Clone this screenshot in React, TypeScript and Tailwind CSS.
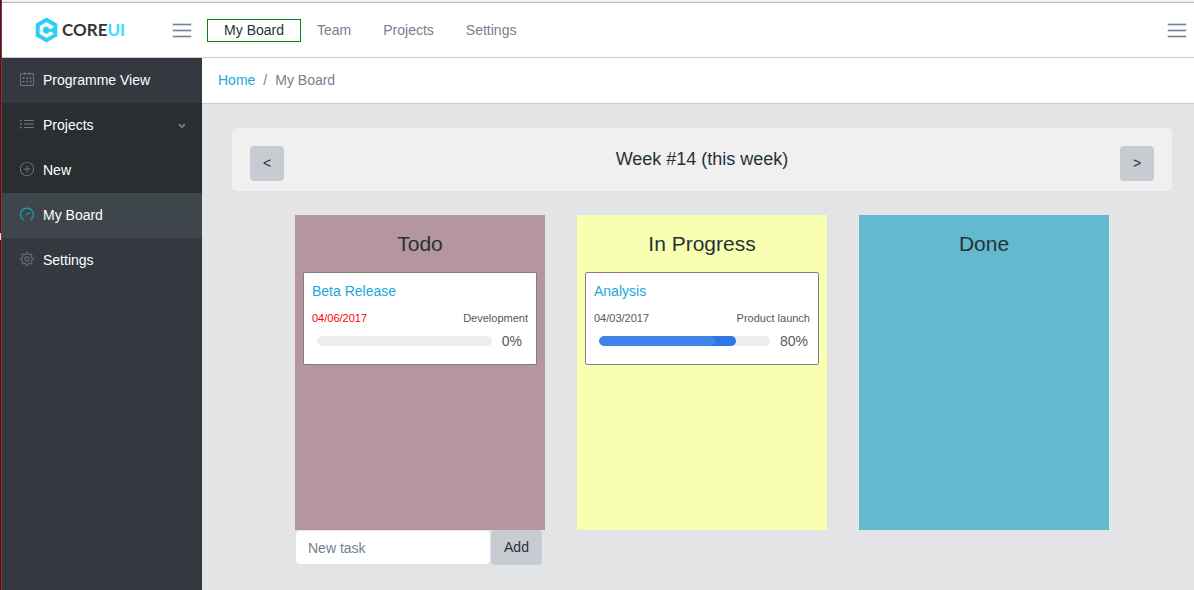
import { useState } from "react";
import type { ReactNode } from "react";
import { SlCalender, SlList, SlPlus, SlSpeedometer, SlSettings } from "react-icons/sl";

type Task = {
  title: string;
  date: string;
  late?: boolean;
  project: string;
  progress: number;
};

function MenuLines() {
  return (
    <svg viewBox="0 0 20 16" className="h-4 w-5" fill="none" stroke="#d3d9df" aria-hidden="true">
      <path d="M0.5 2.5h19M0.5 8.5h19M0.5 14.5h19" strokeWidth="3" />
      <path d="M1 2.5h18M1 8.5h18M1 14.5h18" stroke="#73818f" strokeWidth="1" />
    </svg>
  );
}

function Logo() {
  return (
    <a href="#home" className="flex items-center gap-1" aria-label="CoreUI">
      <svg viewBox="0 0 22 26" className="h-[26px] w-[23px]" aria-hidden="true">
        <path d="M11 0.5 21.8 6.7v12.6L11 25.5 0.2 19.3V6.7z" fill="#2fcdf0" />
        <path
          d="M11 5 17.8 8.9v1.8l-3.2 1.5L11 9.2 7.6 11v4l3.4 2 3.6-2.6 3.2 1.5v1.3L11 21l-6.8-3.9V8.9z"
          fill="#eefafd"
        />
      </svg>
      <span className="font-['Lato'] text-[17px] leading-6 font-bold text-[#303539]">
        CORE<span className="text-[#3ddcff]">UI</span>
      </span>
    </a>
  );
}

function SideItem({
  icon,
  label,
  tone,
  chevron,
}: {
  icon: ReactNode;
  label: string;
  tone: string;
  chevron?: boolean;
}) {
  return (
    <li>
      <a href="#nav" className={`flex h-[45px] items-center gap-[9px] pr-4 pl-[18px] text-white ${tone}`}>
        <span className="shrink-0 pb-[3px] text-[14px]">{icon}</span>
        <span className="flex-1">{label}</span>
        {chevron && (
          <svg viewBox="0 0 8 6" className="h-[6px] w-2" fill="none" stroke="#73818f" strokeWidth="1.8" aria-hidden="true">
            <path d="M1 1.2 4 4.2 7 1.2" />
          </svg>
        )}
      </a>
    </li>
  );
}

function TaskCard({ task }: { task: Task }) {
  return (
    <article className="rounded-[2px] border border-[#808080] bg-white px-2 pt-2 pb-[13px] text-[#55595c]">
      <h3 className="leading-5">
        <a href="#task" className="text-[#20a8d8]">
          {task.title}
        </a>
      </h3>
      <div className="mt-2 flex justify-between text-[11px] leading-[18px]">
        <span className={task.late ? "text-[#ff0000]" : ""}>{task.date}</span>
        <span>{task.project}</span>
      </div>
      <div className="mt-1 flex items-center gap-[10px] pr-[2px] pl-[5px] leading-5">
        <div
          role="progressbar"
          aria-label={task.title}
          aria-valuenow={task.progress}
          className="h-[10px] flex-1 overflow-hidden rounded-full bg-[#eeeeee]"
        >
          <div className="h-full overflow-hidden rounded-full bg-[#2d78e6]" style={{ width: `${task.progress}%` }}>
            <div className="h-full w-[85%] rounded-full bg-[#4086e8]" />
          </div>
        </div>
        <span className={task.progress === 0 ? "pr-1" : ""}>{task.progress}%</span>
      </div>
    </article>
  );
}

function Column({ title, tone, tasks, children }: { title: string; tone: string; tasks: Task[]; children?: ReactNode }) {
  return (
    <section className="w-[250px]">
      <div className={`min-h-[315px] px-2 pt-4 ${tone}`}>
        <h2 className="mb-4 text-center text-[21px] leading-[25px] font-medium text-[#263238]">{title}</h2>
        {tasks.map((t) => (
          <TaskCard key={t.title} task={t} />
        ))}
      </div>
      {children}
    </section>
  );
}

export default function App() {
  const [draft, setDraft] = useState("");

  return (
    <div className="flex min-h-screen bg-[#e3e4e6] font-['Liberation_Sans',Arial,sans-serif] text-[14px] text-[#263238]">
      <div className="flex w-[2px] shrink-0 flex-col border-r border-[#7a3d42] bg-[#560d16]">
        <div className="mt-[233px] h-[7px] bg-[#d9d9d9]" />
      </div>
      <div className="flex min-w-0 flex-1 flex-col">
        <div className="h-[3px] border-b border-[#b2b2b2] bg-[#f2f1f0]" />
        <header className="flex h-[55px] items-center border-b border-[#c8ccd2] bg-white pr-[7px] pl-[33px]">
          <Logo />
          <button type="button" aria-label="Toggle sidebar" className="ml-[47px]">
            <MenuLines />
          </button>
          <nav className="ml-[15px] flex items-center leading-[21px] text-[#73818f]">
            <a href="#board" className="border border-[#008c15] px-4 text-[#263238]">
              My Board
            </a>
            <a href="#team" className="px-4">
              Team
            </a>
            <a href="#projects" className="px-4">
              Projects
            </a>
            <a href="#settings" className="px-4">
              Settings
            </a>
          </nav>
          <button type="button" aria-label="Toggle side panel" className="ml-auto">
            <MenuLines />
          </button>
        </header>

        <div className="flex flex-1">
          <aside className="w-[200px] shrink-0 bg-[#343940]">
            <ul>
              <SideItem icon={<SlCalender color="#6b7a88" />} label="Programme View" tone="" />
              <SideItem icon={<SlList color="#6b7a88" />} label="Projects" tone="bg-[#292e31]" chevron />
              <SideItem icon={<SlPlus color="#6b7a88" />} label="New" tone="bg-[#292e31]" />
              <SideItem icon={<SlSpeedometer color="#20a8d8" />} label="My Board" tone="bg-[#3f464b]" />
              <SideItem icon={<SlSettings color="#6b7a88" />} label="Settings" tone="" />
            </ul>
          </aside>

          <main className="min-w-0 flex-1">
            <nav aria-label="Breadcrumb" className="flex h-[46px] items-center gap-2 border-b border-[#c8ccd2] bg-white px-4 text-[#73818f]">
              <a href="#home" className="text-[#20a8d8]">
                Home
              </a>
              <span>/</span>
              <span>My Board</span>
            </nav>

            <div className="pt-6 pr-[22px] pl-[30px]">
              <div className="flex h-[63px] items-start justify-between rounded-[5px] bg-[#f0f0f0] px-[18px] pt-[18px]">
                <button type="button" aria-label="Previous week" className="h-[35px] w-[34px] rounded-[4px] bg-[#c7ccd3]">
                  &lt;
                </button>
                <h1 className="text-[18px] leading-[26px]">Week #14 (this week)</h1>
                <button type="button" aria-label="Next week" className="h-[35px] w-[34px] rounded-[4px] bg-[#c7ccd3]">
                  &gt;
                </button>
              </div>

              <div className="mt-6 flex justify-center gap-8">
                <Column
                  title="Todo"
                  tone="bg-[#b5969f]"
                  tasks={[{ title: "Beta Release", date: "04/06/2017", late: true, project: "Development", progress: 0 }]}
                >
                  <form className="flex items-center gap-[1px] pl-[1px]" onSubmit={(e) => e.preventDefault()}>
                    <input
                      type="text"
                      aria-label="New task"
                      placeholder="New task"
                      value={draft}
                      onChange={(e) => setDraft(e.target.value)}
                      className="h-[33px] w-[194px] rounded-[4px] bg-white px-3 placeholder:text-[#73818f]"
                    />
                    <button type="submit" className="h-[35px] w-[51px] rounded-[4px] bg-[#c7ccd3]">
                      Add
                    </button>
                  </form>
                </Column>
                <Column
                  title="In Progress"
                  tone="bg-[#f8ffb0]"
                  tasks={[{ title: "Analysis", date: "04/03/2017", project: "Product launch", progress: 80 }]}
                />
                <Column title="Done" tone="bg-[#65b9cf]" tasks={[]} />
              </div>
            </div>
          </main>
        </div>
      </div>
    </div>
  );
}
